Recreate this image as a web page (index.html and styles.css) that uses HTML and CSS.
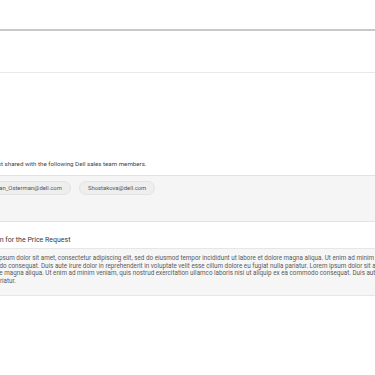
FILE: index.html
```html
<!DOCTYPE html>
<html lang="en">
<head>
  <meta charset="UTF-8" />
  <meta name="viewport" content="width=device-width, initial-scale=1.0" />
  <title>Price Request</title>
  <link rel="stylesheet" href="styles.css">
</head>
<body>
  <div class="page">
    <div class="topbar"></div>
    <div class="tabs"></div>
    <div class="section">
      <div class="note">Price Request shared with the following Dell sales team members.</div>
      <div class="members">
        <span class="chip">Jonathan_Osterman@dell.com</span>
        <span class="chip">Shostakova@dell.com</span>
      </div>
      <div class="label">Justification for the Price Request</div>
      <div class="comment">Lorem ipsum dolor sit amet, consectetur adipiscing elit, sed do eiusmod tempor incididunt ut labore et dolore magna aliqua. Ut enim ad minim veniam, quis nostrud exercitation ullamco laboris nisi ut aliquip ex ea commodo consequat. Duis aute irure dolor in reprehenderit in voluptate velit esse cillum dolore eu fugiat nulla pariatur. Lorem ipsum dolor sit amet, consectetur adipiscing elit, sed do eiusmod tempor incididunt ut labore et dolore magna aliqua. Ut enim ad minim veniam, quis nostrud exercitation ullamco laboris nisi ut aliquip ex ea commodo consequat. Duis aute irure dolor in reprehenderit in voluptate velit esse cillum dolore eu fugiat nulla pariatur.</div>
    </div>
  </div>
</body>
</html>
```

FILE: styles.css
```css
body {
  margin: 0;
  font-family: Roboto, 'Liberation Sans', sans-serif;
  background: #fff;
  color: #333;
  overflow: hidden;
}
.page {
  margin-left: -35px;
  width: 634px;
}
.topbar {
  height: 29px;
  border-bottom: 2px solid #c9c9c9;
  margin-left: -20px;
  margin-right: -300px;
}
.tabs {
  height: 41px;
  border-bottom: 1px solid #e8e8e8;
  margin-left: -20px;
  margin-right: -300px;
}
.section {
  padding-top: 86px;
}
.note {
  font-size: 6.2px;
  line-height: 10px;
  color: #444;
  margin-bottom: 6px;
}
.members {
  display: flex;
  gap: 8px;
  padding: 5px 0 26px 7px;
  background: #f5f5f5;
  border-top: 1px solid #e2e2e2;
  border-bottom: 1px solid #e2e2e2;
  margin-right: -300px;
}
.chip {
  height: 14px;
  line-height: 13px;
  padding: 0 8px;
  font-size: 5.9px;
  color: #555;
  background: #eeeeee;
  border: 1px solid #e3e3e3;
  border-radius: 8px;
  box-sizing: border-box;
}
.label {
  margin-top: 13px;
  font-size: 7px;
  font-weight: 400;
  line-height: 10px;
  color: #3a3a3a;
}
.comment {
  margin-top: 3px;
  padding: 6px 4px 10px 12px;
  background: #f6f6f6;
  border: 1px solid #e6e6e6;
  font-size: 6.3px;
  line-height: 7.6px;
  color: #5a5a5a;
}
```
